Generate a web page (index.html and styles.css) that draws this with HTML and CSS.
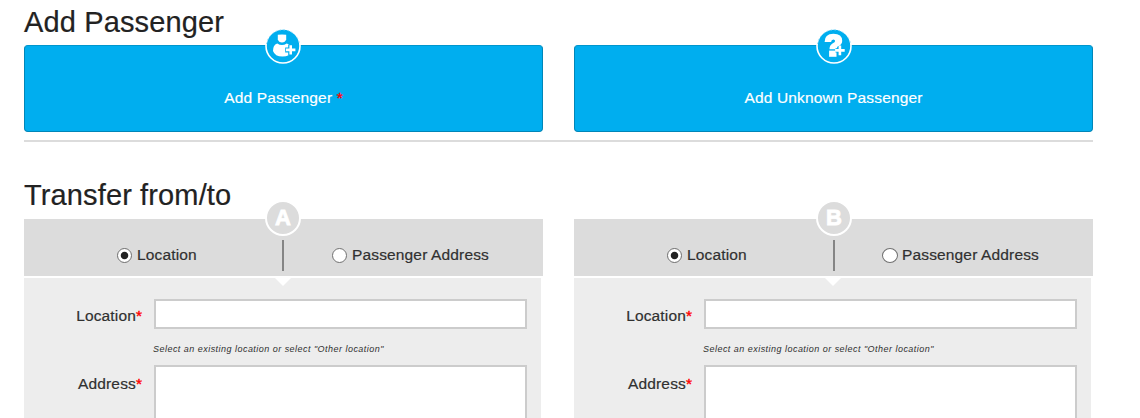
FILE: index.html
```html
<!DOCTYPE html>
<html lang="en">
<head>
<meta charset="utf-8">
<title>Add Passenger</title>
<link rel="stylesheet" href="styles.css">
</head>
<body>
<main class="page">
  <section class="passengers">
    <h2 class="heading">Add Passenger</h2>
    <div class="columns">
      <button class="add-button" type="button">
        <svg class="badge" viewBox="0 0 36 36">
          <circle cx="18" cy="18" r="17" fill="#00aeef" stroke="#fff" stroke-width="1.6"/>
          <path d="M1.500 16a16.700 16.700 0 0 1 33 0" fill="none" stroke="#7fd4f5" stroke-width="1" stroke-dasharray="1.5 2.5"/>
          <path d="M12.800 6.800q4.200-.8 8.400 0v4.500q-1 3.300-4.200 3.300t-4.200-3.300z" fill="#fff"/>
          <path d="M12.200 15.400q4.800 3.200 9.600 0q5 1.500 5 7q-1.800 6.200-9.300 6.200q-7.600 0-9.500-5.500q-.2-6 4.200-7.700z" fill="#fff"/>
          <path d="M25.700 16.400v11M20.200 21.900h11" stroke="#00aeef" stroke-width="5"/>
          <path d="M25.700 17.200v9.400M21 21.900h9.400" stroke="#fff" stroke-width="2.600"/>
        </svg>
        <span class="add-label">Add Passenger <b class="star">*</b></span>
      </button>
      <button class="add-button" type="button">
        <svg class="badge" viewBox="0 0 36 36">
          <circle cx="18" cy="18" r="17" fill="#00aeef" stroke="#fff" stroke-width="1.6"/>
          <path d="M1.500 16a16.700 16.700 0 0 1 33 0" fill="none" stroke="#7fd4f5" stroke-width="1" stroke-dasharray="1.5 2.5"/>
          <path d="M8.600 14q-.2-8 8.800-8.200q8.800.2 8.800 7q0 3.500-3.400 5.300q-2.300 1.300-2.300 3.200h-7q-.2-4 3.300-6q2.300-1.100 2.300-2.300q0-1.500-1.800-1.500q-2 0-2.200 2.500z" fill="#fff"/>
          <path d="M13.100 22.600h7.400v6.200h-7.400z" fill="#fff"/>
          <path d="M23.900 18v9M19.500 22.400h9" stroke="#00aeef" stroke-width="4.400"/>
          <path d="M23.900 17.600v9.600M19.100 22.400h9.600" stroke="#fff" stroke-width="2.600"/>
        </svg>
        <span class="add-label">Add Unknown Passenger</span>
      </button>
    </div>
  </section>
  <section class="transfer">
    <h2 class="heading">Transfer from/to</h2>
    <div class="columns">
      <article class="panel">
        <header class="panel-head">
          <span class="letter">A</span>
          <label class="choice"><input class="radio" type="radio" name="from" checked>Location</label>
          <i class="divider"></i>
          <label class="choice choice-second"><input class="radio" type="radio" name="from">Passenger Address</label>
        </header>
        <div class="panel-body">
          <label class="field-label" for="loc-a">Location<b class="star">*</b></label>
          <div class="field"><input class="text-box" id="loc-a" type="text">
            <p class="hint">Select an existing location or select "Other location"</p></div>
          <label class="field-label address-label" for="addr-a">Address<b class="star">*</b></label>
          <textarea class="text-area" id="addr-a"></textarea>
        </div>
      </article>
      <article class="panel">
        <header class="panel-head">
          <span class="letter">B</span>
          <label class="choice"><input class="radio" type="radio" name="to" checked>Location</label>
          <i class="divider"></i>
          <label class="choice choice-second"><input class="radio radio-wide" type="radio" name="to">Passenger Address</label>
        </header>
        <div class="panel-body">
          <label class="field-label" for="loc-b">Location<b class="star">*</b></label>
          <div class="field"><input class="text-box" id="loc-b" type="text">
            <p class="hint">Select an existing location or select "Other location"</p></div>
          <label class="field-label address-label" for="addr-b">Address<b class="star">*</b></label>
          <textarea class="text-area" id="addr-b"></textarea>
        </div>
      </article>
    </div>
  </section>
</main>
</body>
</html>
```
FILE: styles.css
```css
* { box-sizing: border-box; }
body {
  margin: 0;
  background: #fff;
  color: #303030;
  font-family: "Liberation Sans", Arial, sans-serif;
  font-size: 15.5px;
  letter-spacing: .15px;
}
.page { width: 1093px; height: 418px; padding: 5px 0 0 24px; overflow: hidden; }
.passengers { height: 137px; border-bottom: 2px solid #dcdcdc; }
.transfer { padding-top: 36px; }
.heading {
  margin: 0 0 6px;
  font-size: 29px;
  line-height: 34px;
  font-weight: 400;
  letter-spacing: .13px;
  color: #222;
  -webkit-text-stroke: .2px #222;
}
.transfer .heading { margin-bottom: 7px; }
.columns {
  display: grid;
  grid-template-columns: 519px 519px;
  column-gap: 31px;
}
.add-button {
  position: relative;
  height: 87px;
  padding: 18px 0 0;
  border: 1px solid #0086b8;
  border-top-color: #0096cd;
  border-radius: 4px;
  background: #00aeef;
  color: #fff;
  font: inherit;
  letter-spacing: inherit;
  line-height: 18px;
}
.add-label { -webkit-text-stroke: .2px #fff; }
.badge {
  position: absolute;
  top: -18px;
  left: 240px;
  width: 36px;
  height: 36px;
}
.add-button + .add-button .badge { left: 241px; }
.star {
  color: #f00;
  font-weight: 400;
  letter-spacing: 0;
  -webkit-text-stroke: .4px #f00;
}
.panel-head {
  position: relative;
  display: flex;
  align-items: center;
  height: 57px;
  padding: 15px 0 0 93px;
  background: #dcdcdc;
  line-height: 18px;
}
.letter {
  position: absolute;
  top: -19px;
  left: 241px;
  width: 36px;
  height: 36px;
  border: 2px solid #fff;
  border-radius: 50%;
  background: #dcdcdc;
  color: #fff;
  font: 700 22px/31px "Liberation Sans", Arial, sans-serif;
  letter-spacing: 0;
  text-align: center;
  -webkit-text-stroke: .8px #fff;
}
.panel + .panel .letter { left: 242px; }
.choice {
  display: flex;
  align-items: center;
  gap: 5px;
  width: 165px;
  white-space: nowrap;
  -webkit-text-stroke: .2px #303030;
}
.choice-second { width: auto; padding-left: 48px; }
.radio {
  appearance: none;
  flex: none;
  width: 15px;
  height: 15px;
  margin: 0;
  border: 1.5px solid #707070;
  border-radius: 50%;
  background: #fff;
}
.radio:checked { background: radial-gradient(circle, #222 0 3.3px, #fff 4.2px); }
.radio-wide { width: 16px; margin-right: -1px; }
.divider { width: 2px; height: 31px; margin: 0; background: #858585; }
.panel + .panel .divider { margin-left: 1px; margin-right: -1px; }
.panel-body {
  position: relative;
  display: grid;
  grid-template-columns: 118px 373px;
  column-gap: 12px;
  align-items: start;
  width: 517px;
  height: 160px;
  margin-top: 2px;
  padding-top: 21px;
  background: #ededed;
}
.panel-body::before {
  content: "";
  position: absolute;
  top: -1px;
  left: 250px;
  border: 9px solid transparent;
  border-top-color: #fff;
  border-bottom: 0;
}
.field-label {
  padding-top: 8px;
  text-align: right;
  line-height: 18px;
  -webkit-text-stroke: .2px #303030;
}
.address-label { padding-top: 10px; }
.field { height: 66px; }
.text-box, .text-area {
  display: block;
  width: 373px;
  height: 30px;
  margin: 0;
  border: 2px solid #ccc;
  background: #fff;
}
.text-area { height: 100px; resize: none; }
.hint {
  margin: 15px 0 0 -1px;
  font-size: 9px;
  line-height: 11px;
  font-style: italic;
  letter-spacing: .47px;
  white-space: nowrap;
}
```
